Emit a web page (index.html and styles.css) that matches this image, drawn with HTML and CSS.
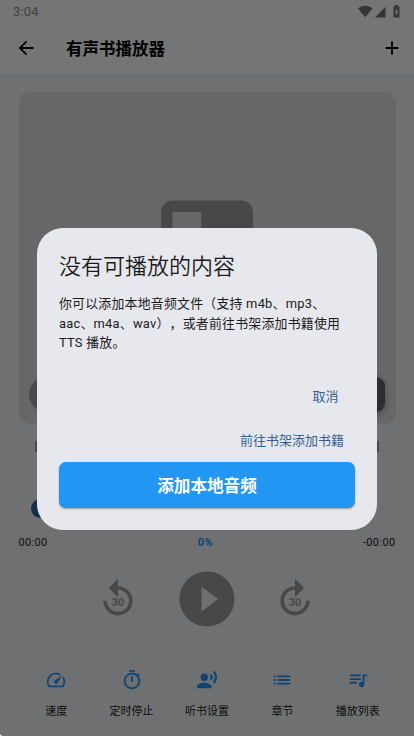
FILE: index.html
```html
<!DOCTYPE html>
<html lang="zh-CN">
<head>
<meta charset="utf-8">
<title>有声书播放器</title>
<link rel="stylesheet" href="styles.css">
</head>
<body>
<div class="screen">
  <header class="top">
    <div class="status">
      <span class="clock">3:04</span>
      <svg class="status-icons" viewBox="0 0 42 14">
        <path d="M0 3.600C4-.2 10.500-.2 14.500 3.600L7.250 12.200z"/>
        <path d="M27.500 1.800V12.500H17z"/>
        <path fill-rule="evenodd" d="M37 0h3v1.300h1.500v11.200h-6V1.300H37zM39 3.200l-2.300 4.300h1.400v3.200l2.300-4.300H39z"/>
      </svg>
    </div>
    <div class="appbar">
      <svg class="icon" viewBox="0 0 24 24"><path d="M20 11H7.830l5.590-5.590L12 4l-8 8 8 8 1.410-1.410L7.830 13H20z"/></svg>
      <h1>有声书播放器</h1>
      <svg class="icon" viewBox="0 0 24 24"><path d="M19 13h-6v6h-2v-6H5v-2h6V5h2v6h6z"/></svg>
    </div>
  </header>
  <main>
    <div class="cover">
      <svg class="book" viewBox="0 0 24 24"><path d="M18 2H6c-1.100 0-2 .9-2 2v16c0 1.100.9 2 2 2h12c1.100 0 2-.9 2-2V4c0-1.100-.9-2-2-2zM6 4h5v8l-2.500-1.500L6 12z"/></svg>
      <div class="cover-tools"><i class="round"></i><i class="square"></i></div>
    </div>
    <div class="marks"><i></i><i></i></div>
    <div class="slider"><i></i></div>
    <div class="times"><span>00:00</span><b>0%</b><span>-00:00</span></div>
    <div class="controls">
      <div class="skip">
        <svg viewBox="0 0 24 24"><path d="M12 5V1L7 6l5 5V7c3.300 0 6 2.700 6 6s-2.700 6-6 6-6-2.700-6-6H4c0 4.400 3.600 8 8 8s8-3.600 8-8-3.600-8-8-8z"/></svg>
        <span>30</span>
      </div>
      <svg class="play" viewBox="0 0 24 24"><path d="M12 2C6.480 2 2 6.480 2 12s4.480 10 10 10 10-4.480 10-10S17.520 2 12 2zM10 16.500v-9l6 4.500z"/></svg>
      <div class="skip">
        <svg viewBox="0 0 24 24"><path d="M12 5V1l5 5-5 5V7c-3.300 0-6 2.700-6 6s2.700 6 6 6 6-2.700 6-6h2c0 4.400-3.600 8-8 8s-8-3.600-8-8 3.600-8 8-8z"/></svg>
        <span>30</span>
      </div>
    </div>
    <nav>
      <div><svg viewBox="0 0 24 24"><path d="M20.380 8.570l-1.230 1.850a8 8 0 0 1-.22 7.580H5.070A8 8 0 0 1 15.580 6.850l1.850-1.230A10 10 0 0 0 3.350 19a2 2 0 0 0 1.720 1h13.850a2 2 0 0 0 1.740-1 10 10 0 0 0-.27-10.440zm-9.790 6.840a2 2 0 0 0 2.830 0l5.660-8.490-8.490 5.660a2 2 0 0 0 0 2.830z"/></svg><span>速度</span></div>
      <div><svg viewBox="0 0 24 24"><path d="M15 1H9v2h6V1zm-4 13h2V8h-2v6zm8.030-6.610l1.420-1.420c-.43-.51-.9-.99-1.410-1.410l-1.420 1.420C16.070 4.740 14.120 4 12 4c-4.970 0-9 4.030-9 9s4.020 9 9 9 9-4.030 9-9c0-2.120-.74-4.070-1.970-5.610zM12 20c-3.870 0-7-3.130-7-7s3.130-7 7-7 7 3.130 7 7-3.130 7-7 7z"/></svg><span>定时停止</span></div>
      <div><svg viewBox="0 0 24 24"><circle cx="9" cy="9" r="4"/><path d="M9 15c-2.670 0-8 1.340-8 4v2h16v-2c0-2.660-5.330-4-8-4zm7.760-9.640l-1.680 1.690c.84 1.180.84 2.710 0 3.890l1.680 1.690c2.020-2.020 2.020-5.070 0-7.270zM20.070 2l-1.630 1.630c2.770 3.020 2.770 7.560 0 10.740L20.070 16c3.900-3.890 3.910-9.950 0-14z"/></svg><span>听书设置</span></div>
      <div><svg viewBox="0 0 24 24"><path d="M3 13h2v-2H3v2zm0 4h2v-2H3v2zm0-8h2V7H3v2zm4 4h14v-2H7v2zm0 4h14v-2H7v2zM7 7v2h14V7H7z"/></svg><span>章节</span></div>
      <div><svg viewBox="0 0 24 24"><path d="M15 6H3v2h12V6zm0 4H3v2h12v-2zM3 16h8v-2H3v2zM17 6v8.180c-.31-.11-.65-.18-1-.18-1.660 0-3 1.340-3 3s1.340 3 3 3 3-1.340 3-3V8h3V6h-5z"/></svg><span>播放列表</span></div>
    </nav>
  </main>
</div>
<div class="scrim">
  <section class="dialog" role="dialog">
    <h2>没有可播放的内容</h2>
    <p>你可以添加本地音频文件（支持 m4b、mp3、<br>aac、m4a、wav），或者前往书架添加书籍使用<br>TTS 播放。</p>
    <a class="cancel">取消</a>
    <a class="shelf">前往书架添加书籍</a>
    <button>添加本地音频</button>
  </section>
</div>
</body>
</html>
```

FILE: styles.css
```css
* { box-sizing: border-box; }
body {
  margin: 0;
  background: #fff;
  font-family: Roboto, "Noto Sans CJK SC", sans-serif;
  text-spacing-trim: space-all;
  overflow: hidden;
}
h1, h2, p { margin: 0; }
svg { display: block; flex: none; }
i { display: block; }
.screen {
  width: 414px;
  height: 736px;
  background: #f2f4f8;
  color: #1a1c20;
  border-bottom-left-radius: 3px;
}
.top { height: 74px; background: #fff; color: #000; }
.status {
  height: 22px;
  display: flex;
  justify-content: space-between;
  align-items: center;
  padding: 1px 14px 0 13px;
}
.clock { font-size: 13px; letter-spacing: .2px; color: #8c8c8c; }
.status-icons { width: 42px; height: 14px; fill: #757575; }
.appbar {
  height: 52px;
  display: flex;
  align-items: center;
  padding: 0 11px 0 14.500px;
}
.icon { width: 22px; height: 22px; }
.appbar h1 {
  flex: 1;
  margin-left: 29.500px;
  padding-top: 3px;
  font-size: 16.500px;
  line-height: 24px;
  font-weight: 700;
}
main { padding: 18px 18.500px 0; }
.cover {
  height: 332px;
  padding: 96.500px 10.500px 12px;
  border-radius: 11px;
  background: #e0e0e0;
  display: flex;
  flex-direction: column;
  justify-content: space-between;
}
.book { width: 138px; height: 138px; fill: #9e9e9e; align-self: center; }
.cover-tools { display: flex; justify-content: space-between; }
.cover-tools i { width: 35px; height: 35px; }
.round { border-radius: 50%; background: #a0a0a0; }
.square { border-radius: 9px; background: #626262; box-shadow: 0 2px 6px rgba(0, 0, 0, .3); }
.marks { display: flex; justify-content: space-between; padding: 17px 16.500px 0; }
.marks i { width: 2px; height: 11px; background: #a0a2a5; }
.slider { height: 66px; padding: 47px 12.500px 0; }
.slider i { width: 19px; height: 19px; border-radius: 50%; background: #2c689c; }
.times {
  display: flex;
  justify-content: space-between;
  height: 16px;
  margin-top: 16px;
  line-height: 17px;
  font-size: 11px;
  letter-spacing: .35px;
}
.times b { color: #2196f3; }
.controls {
  height: 66px;
  margin-top: 16px;
  padding: 0 78px;
  display: flex;
  justify-content: space-between;
  align-items: center;
}
.controls svg { fill: #9e9e9e; }
.skip { width: 44px; height: 44px; position: relative; left: -.5px; }
.skip svg { width: 44px; height: 44px; }
.skip span {
  position: absolute;
  left: 0;
  right: 0;
  top: 18px;
  line-height: 15px;
  text-align: center;
  font-size: 11px;
  font-weight: 700;
  color: #9e9e9e;
}
.controls .play { width: 66px; height: 66px; }
nav { display: grid; grid-template-columns: repeat(5, 1fr); margin-top: 37px; }
nav div { display: flex; flex-direction: column; align-items: center; gap: 13px; }
nav svg { width: 22px; height: 22px; fill: #2196f3; }
nav span { font-size: 11px; line-height: 16px; }
.scrim {
  position: absolute;
  inset: 0;
  background: rgba(0, 0, 0, .54);
  border-bottom-left-radius: 3px;
  padding: 228px 37px 0;
}
.dialog {
  height: 302px;
  padding: 24px 22px 0;
  border-radius: 26px;
  background: #e7e8ee;
  color: #1a1c20;
  display: flex;
  flex-direction: column;
}
.dialog h2 { font-size: 22px; line-height: 30px; font-weight: 350; }
.dialog p {
  margin-top: 12px;
  font-size: 12.900px;
  line-height: 19.500px;
  letter-spacing: .23px;
  white-space: nowrap;
}
.dialog a {
  align-self: flex-end;
  font-size: 13px;
  line-height: 20px;
  color: #36618e;
}
.cancel { margin: 34.500px 16.500px 0 0; }
.shelf { margin: 24px 11px 0 0; }
.dialog button {
  height: 46px;
  margin-top: 11px;
  padding: 3px 0 0;
  border: 0;
  border-radius: 7px;
  background: #2196f3;
  color: #fff;
  font: 700 16.600px/43px Roboto, "Noto Sans CJK SC", sans-serif;
  box-shadow: 0 1px 2px rgba(0, 0, 0, .35);
}
```
